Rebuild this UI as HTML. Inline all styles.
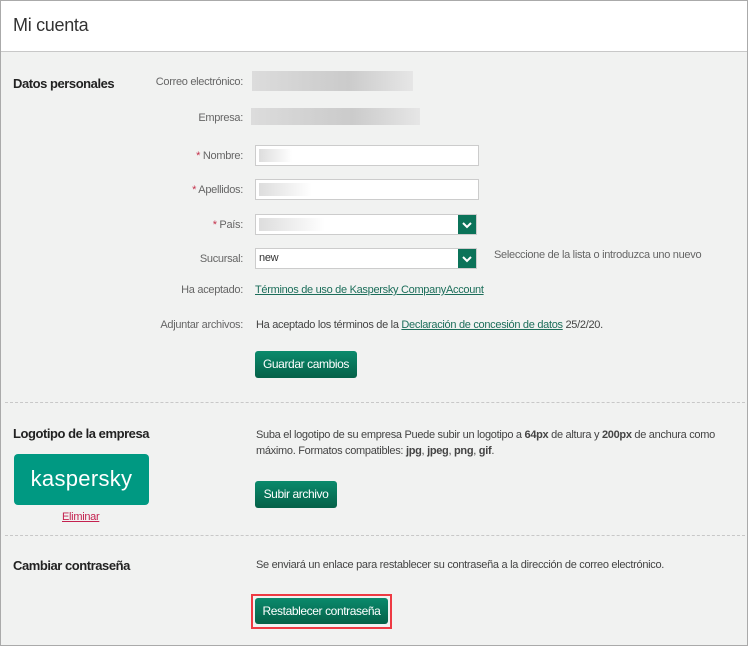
<!DOCTYPE html>
<html><head><meta charset="utf-8"><style>
*{box-sizing:border-box;margin:0;padding:0}
body{width:748px;height:646px;overflow:hidden;background:#fff;font-family:"Liberation Sans",sans-serif;color:#333}
#f{position:absolute;left:0;top:0;width:748px;height:646px;background:#f1f2f1;box-shadow:inset 0 0 0 1px #aaa}
#h{position:absolute;left:1px;top:1px;width:746px;height:51px;background:#fff;border-bottom:1px solid #c8c8c8}
.a{position:absolute;white-space:nowrap}
.t{font-size:18px;color:#333;letter-spacing:-0.3px}
.s{font-size:13px;color:#222;font-weight:bold;letter-spacing:-0.45px}
.l{font-size:11px;color:#666;text-align:right;width:160px;left:83px;letter-spacing:-0.3px}
.r{color:#c4314b}
.x{font-size:11px;color:#444;letter-spacing:-0.3px}
.bar{position:absolute;background:linear-gradient(90deg,#dcdcdc,#d0d0d0 40%,#cbcbcb 60%,#e6e6e6)}
.in{position:absolute;background:#fff;border:1px solid #ccc;height:21px}
.in i{position:absolute;left:3px;top:3px;height:13px;background:linear-gradient(90deg,#ddd,#fff)}
.dd{position:absolute;right:0;top:0;width:18px;height:19px;background:#0b7359}
.btn{position:absolute;background:linear-gradient(#0a8a6c,#056148);color:#fff;font-size:12px;border-radius:3px;text-align:center;letter-spacing:-0.4px}
.dash{position:absolute;left:5px;width:740px;border-top:1px dashed #c8c8c8}
a{color:#1c6e5a;text-decoration:underline}
</style></head><body>
<div id="f">
<div id="h"><div class="a t" style="left:12px;top:14px">Mi cuenta</div></div>
<div class="a s" style="left:13px;top:76px">Datos personales</div>
<div class="a l" style="top:76px">Correo electrónico:</div>
<div class="bar" style="left:252px;top:71px;width:161px;height:20px"></div>
<div class="a l" style="top:112px">Empresa:</div>
<div class="bar" style="left:251px;top:108px;width:169px;height:17px"></div>
<div class="a l" style="top:150px"><span class="r">*</span> Nombre:</div>
<div class="in" style="left:255px;top:145px;width:224px"><i style="width:33px"></i></div>
<div class="a l" style="top:184px"><span class="r">*</span> Apellidos:</div>
<div class="in" style="left:255px;top:179px;width:224px"><i style="width:53px"></i></div>
<div class="a l" style="top:219px"><span class="r">*</span> País:</div>
<div class="in" style="left:255px;top:214px;width:222px"><i style="width:66px"></i><div class="dd"><svg width="18" height="19"><path d="M5 8l4 4 4-4" stroke="#fff" stroke-width="2" fill="none"/></svg></div></div>
<div class="a l" style="top:253px">Sucursal:</div>
<div class="in" style="left:255px;top:248px;width:222px"><span class="a x" style="left:3px;top:3px;color:#333">new</span><div class="dd"><svg width="18" height="19"><path d="M5 8l4 4 4-4" stroke="#fff" stroke-width="2" fill="none"/></svg></div></div>
<div class="a x" style="left:494px;top:249px;color:#666">Seleccione de la lista o introduzca uno nuevo</div>
<div class="a l" style="top:284px">Ha aceptado:</div>
<div class="a x" style="left:255px;top:284px"><a>Términos de uso de Kaspersky CompanyAccount</a></div>
<div class="a l" style="top:319px">Adjuntar archivos:</div>
<div class="a x" style="left:256px;top:319px">Ha aceptado los términos de la <a>Declaración de concesión de datos</a> 25/2/20.</div>
<div class="btn" style="left:255px;top:351px;width:102px;height:27px;line-height:27px">Guardar cambios</div>
<div class="dash" style="top:402px"></div>
<div class="a s" style="left:13px;top:426px">Logotipo de la empresa</div>
<div class="a x" style="left:256px;top:427px;line-height:16px">Suba el logotipo de su empresa Puede subir un logotipo a <b>64px</b> de altura y <b>200px</b> de anchura como<br>máximo. Formatos compatibles: <b>jpg</b>, <b>jpeg</b>, <b>png</b>, <b>gif</b>.</div>
<div class="a" style="left:14px;top:454px;width:135px;height:51px;background:#009982;border-radius:4px;color:#fff;font-size:22px;text-align:center;line-height:50px;letter-spacing:0.3px">kaspersky</div>
<div class="a x" style="left:62px;top:511px"><a style="color:#c4214f">Eliminar</a></div>
<div class="btn" style="left:255px;top:481px;width:82px;height:27px;line-height:27px">Subir archivo</div>
<div class="dash" style="top:535px"></div>
<div class="a s" style="left:13px;top:558px">Cambiar contraseña</div>
<div class="a x" style="left:256px;top:559px">Se enviará un enlace para restablecer su contraseña a la dirección de correo electrónico.</div>
<div class="a" style="left:251px;top:594px;width:141px;height:35px;border:2px solid #ee3a43"></div>
<div class="btn" style="left:255px;top:598px;width:133px;height:26px;line-height:26px">Restablecer contraseña</div>
</div>
</body></html>
